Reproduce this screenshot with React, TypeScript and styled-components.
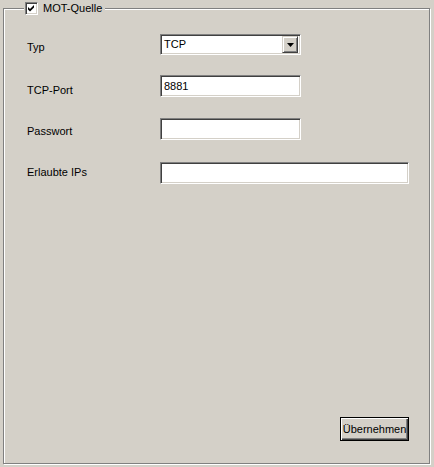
import * as React from 'react';
import styled, { createGlobalStyle } from 'styled-components';

const GlobalStyle = createGlobalStyle`
    html, body {
        margin: 0;
        padding: 0;
        background: #d4d0c8;
    }
    body {
        font-family: 'Liberation Sans', Arial, sans-serif;
        font-size: 11px;
        color: #000;
    }
`;

const Page = styled.div`
    width: 434px;
    height: 467px;
    box-sizing: border-box;
    padding: 8px 4px 3px 3px;
    background: #d4d0c8;
`;

const Frame = styled.div`
    position: relative;
    box-sizing: border-box;
    height: 100%;
    border: 1px solid #808080;
    box-shadow: inset 1px 1px 0 #fff, 1px 1px 0 #fff;
    padding: 25px 20px 22px 22px;
    display: flex;
    flex-direction: column;
`;

const Legend = styled.label`
    position: absolute;
    top: -7px;
    left: 20px;
    display: flex;
    align-items: center;
    gap: 5px;
    padding: 0 3px 0 1px;
    height: 13px;
    background: #d4d0c8;
    line-height: 13px;
`;

const CheckBox = styled.span`
    box-sizing: border-box;
    width: 13px;
    height: 13px;
    background: #fff;
    border-style: solid;
    border-width: 1px;
    border-color: #808080 #fff #fff #808080;
    box-shadow: inset 1px 1px 0 #404040, inset -1px -1px 0 #d4d0c8;
    display: flex;
    align-items: center;
    justify-content: center;
`;

const Form = styled.div`
    display: grid;
    grid-template-columns: 134px auto;
    grid-template-rows: 41px 43px 44px 22px;
    align-items: start;
`;

const Label = styled.div<{ $offset: number }>`
    padding-left: 1px;
    margin-top: ${(p) => p.$offset}px;
    line-height: 13px;
`;

const Field = styled.div<{ $width: number; $height?: number }>`
    box-sizing: border-box;
    width: ${(p) => p.$width}px;
    height: ${(p) => p.$height ?? 22}px;
    background: #fff;
    border-style: solid;
    border-width: 1px;
    border-color: #808080 #fff #fff #808080;
    box-shadow: inset 1px 1px 0 #404040, inset -1px -1px 0 #d4d0c8;
    display: flex;
    align-items: center;
    padding: 2px 2px 2px 3px;
    line-height: 13px;
`;

const SelectText = styled.span`
    flex: 1;
`;

const ArrowButton = styled.span`
    box-sizing: border-box;
    width: 16px;
    height: 17px;
    background: #d4d0c8;
    border-style: solid;
    border-width: 1px;
    border-color: #d4d0c8 #404040 #404040 #d4d0c8;
    box-shadow: inset 1px 1px 0 #fff, inset -1px -1px 0 #808080;
    display: flex;
    align-items: center;
    justify-content: center;
`;

const Spacer = styled.div`
    flex: 1;
`;

const Footer = styled.div`
    display: flex;
    justify-content: flex-end;
`;

const Button = styled.button`
    box-sizing: border-box;
    width: 69px;
    height: 24px;
    padding: 0;
    font-family: 'Liberation Sans', Arial, sans-serif;
    font-size: 11px;
    color: #000;
    background: #d4d0c8;
    border: 1px solid #000;
    box-shadow: inset 1px 1px 0 #fff, inset -1px -1px 0 #404040, inset -2px -2px 0 #808080;
`;

const rows = [
    { label: 'Typ', offset: 7 },
    { label: 'TCP-Port', offset: 9 },
    { label: 'Passwort', offset: 7 },
    { label: 'Erlaubte IPs', offset: 4 },
];

const App = () => {
    return (
        <Page>
            <GlobalStyle />
            <Frame>
                <Legend>
                    <CheckBox>
                        <svg width="7" height="7" viewBox="0 0 7 7">
                            <path d="M0 2 L2 4 L6 0 L6 2.5 L2 6.5 L0 4.5 Z" fill="#000" />
                        </svg>
                    </CheckBox>
                    MOT-Quelle
                </Legend>
                <Form>
                    <Label $offset={rows[0].offset}>{rows[0].label}</Label>
                    <Field $width={141} $height={21}>
                        <SelectText>TCP</SelectText>
                        <ArrowButton>
                            <svg width="7" height="4" viewBox="0 0 7 4">
                                <path d="M0 0 H7 L3.5 4 Z" fill="#000" />
                            </svg>
                        </ArrowButton>
                    </Field>
                    <Label $offset={rows[1].offset}>{rows[1].label}</Label>
                    <Field $width={141}>8881</Field>
                    <Label $offset={rows[2].offset}>{rows[2].label}</Label>
                    <Field $width={141} />
                    <Label $offset={rows[3].offset}>{rows[3].label}</Label>
                    <Field $width={249} />
                </Form>
                <Spacer />
                <Footer>
                    <Button>Übernehmen</Button>
                </Footer>
            </Frame>
        </Page>
    );
};

export default App;
